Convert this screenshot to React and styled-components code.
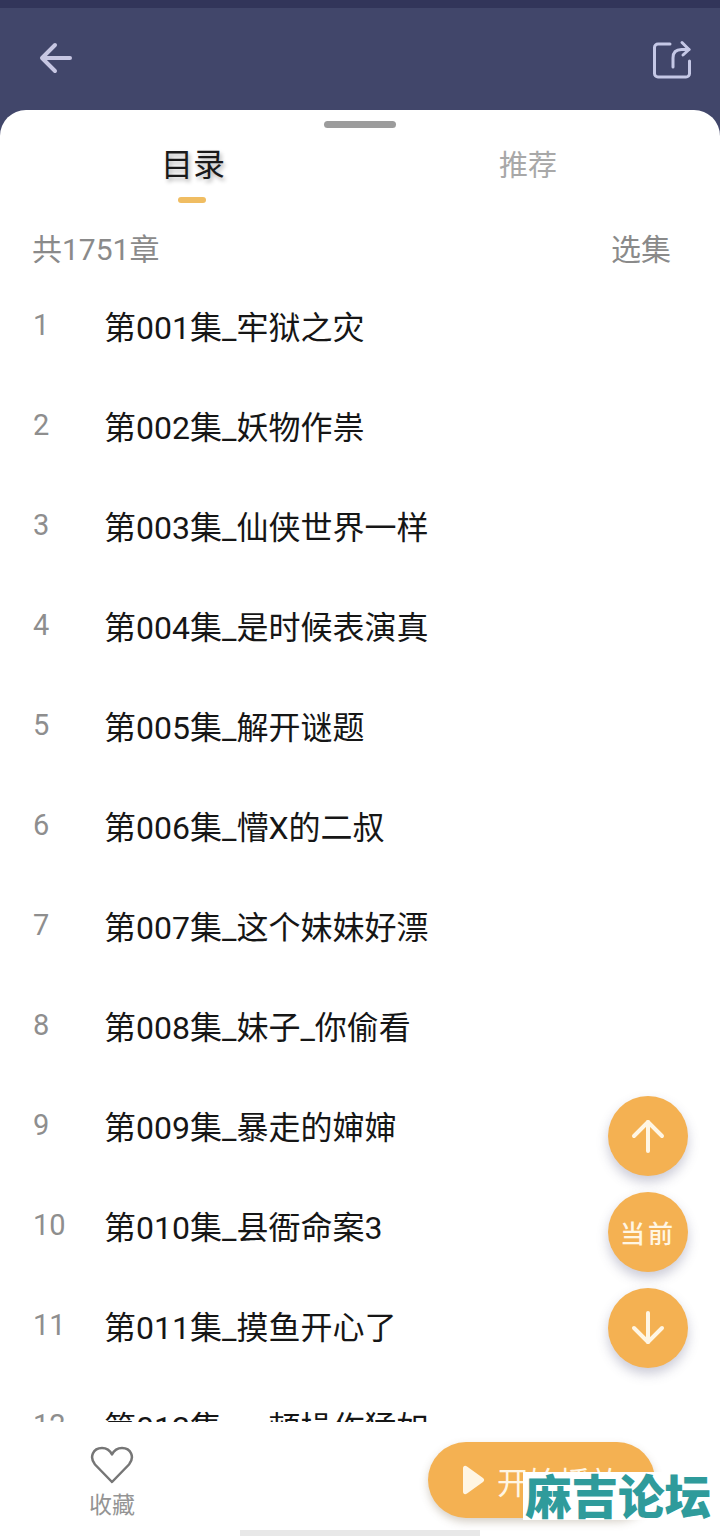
import React from 'react';
import styled, { createGlobalStyle } from 'styled-components';

const chapters = [
  '第001集_牢狱之灾',
  '第002集_妖物作祟',
  '第003集_仙侠世界一样',
  '第004集_是时候表演真',
  '第005集_解开谜题',
  '第006集_懵X的二叔',
  '第007集_这个妹妹好漂',
  '第008集_妹子_你偷看',
  '第009集_暴走的婶婶',
  '第010集_县衙命案3',
  '第011集_摸鱼开心了',
  '第012集_一顿操作猛如',
];

const GlobalStyle = createGlobalStyle`
  html, body {
    margin: 0;
    padding: 0;
    background: #41466a;
  }
  * {
    box-sizing: border-box;
  }
`;

const Page = styled.div`
  width: 720px;
  height: 1536px;
  overflow: hidden;
  display: flex;
  flex-direction: column;
  background: #41466a;
  font-family: Roboto, "Noto Sans CJK SC", sans-serif;
`;

const StatusStrip = styled.div`
  height: 8px;
  background: #32355a;
`;

const Header = styled.header`
  height: 102px;
  padding: 32px 28px 0 38px;
  display: flex;
  justify-content: space-between;
  align-items: flex-start;
`;

const Sheet = styled.main`
  position: relative;
  flex: 1;
  min-height: 0;
  display: flex;
  flex-direction: column;
  background: #fff;
  border-radius: 26px 26px 0 0;
`;

const Handle = styled.div`
  width: 72px;
  height: 7px;
  margin: 11px auto 0;
  border-radius: 4px;
  background: #9c9c9c;
`;

const Tabs = styled.div`
  height: 82px;
  display: flex;
`;

const Tab = styled.div`
  width: 50%;
  position: relative;
  display: flex;
  justify-content: center;
  padding-top: ${(p) => (p.$active ? '14px' : '15px')};
  padding-left: ${(p) => (p.$active ? '26px' : '0')};
  padding-right: ${(p) => (p.$active ? '0' : '24px')};
  font-size: ${(p) => (p.$active ? '32px' : '29px')};
  line-height: 46px;
  color: ${(p) => (p.$active ? '#1a1a1a' : '#a8a8a8')};
  text-shadow: ${(p) => (p.$active ? '2px 3px 4px rgba(0, 0, 0, 0.3)' : 'none')};
`;

const TabLabel = styled.span`
  display: block;
`;

const Indicator = styled.span`
  position: absolute;
  left: 178px;
  top: 69px;
  width: 28px;
  height: 6px;
  border-radius: 3px;
  background: #f0bd62;
`;

const Summary = styled.div`
  height: 67px;
  padding: 6px 49px 0 32px;
  display: flex;
  justify-content: space-between;
  align-items: center;
  font-size: 30px;
  color: #8a8a8a;
`;

const List = styled.ol`
  flex: 1;
  min-height: 0;
  overflow: hidden;
  margin: 0;
  padding: 0;
  list-style: none;
`;

const Row = styled.li`
  height: 100px;
  display: flex;
  align-items: center;
`;

const RowIndex = styled.span`
  width: 105px;
  padding-left: 33px;
  font-size: 29px;
  color: #8e8e8e;
  line-height: 40px;
  margin-bottom: 4px;
`;

const RowTitle = styled.span`
  font-size: 32px;
  line-height: 46px;
  color: #161616;
  white-space: nowrap;
  margin-left: -1px;
  margin-top: 2px;
`;

const FabStack = styled.div`
  position: absolute;
  right: 32px;
  top: 986px;
  display: flex;
  flex-direction: column;
  gap: 16px;
`;

const Fab = styled.button`
  width: 80px;
  height: 80px;
  padding: 0;
  border: 0;
  border-radius: 50%;
  display: flex;
  align-items: center;
  justify-content: center;
  background: #f4b152;
  color: #fff6e4;
  font-family: inherit;
  font-size: 25px;
  font-weight: 500;
  letter-spacing: 3px;
  box-shadow: 0 6px 12px rgba(70, 70, 110, 0.28);
`;

const Footer = styled.footer`
  height: 114px;
  flex-shrink: 0;
  display: flex;
  flex-direction: column;
  background: #fff;
`;

const FooterRow = styled.div`
  flex: 1;
  display: flex;
  justify-content: space-between;
  padding: 20px 65px 0 88px;
`;

const Favorite = styled.div`
  width: 48px;
  padding-top: 4px;
  display: flex;
  flex-direction: column;
  align-items: center;
  gap: 5px;
  font-size: 23px;
  line-height: 34px;
  color: #949494;
`;

const PlayButton = styled.button`
  width: 227px;
  height: 76px;
  padding: 0 0 0 33px;
  border: 0;
  border-radius: 38px;
  display: flex;
  align-items: center;
  gap: 12px;
  background: #f4b152;
  color: #fff6e4;
  font-family: inherit;
  font-size: 31px;
  box-shadow: 0 4px 8px rgba(120, 100, 70, 0.3);
`;

const HomeBar = styled.div`
  width: 240px;
  height: 6px;
  margin: 0 auto;
  background: #e8e8e8;
`;

const Watermark = styled.div`
  position: absolute;
  right: 0;
  bottom: 16px;
  width: 197px;
  height: 48px;
  padding-left: 2px;
  background: #fff;
  color: #2f9b9b;
  font-size: 46.500px;
  font-weight: 900;
  line-height: 52px;
  white-space: nowrap;
  overflow: hidden;
`;

const BackIcon = () => (
  <svg width="36" height="36" viewBox="0 0 36 36" fill="none" stroke="#c7c7e3" strokeWidth="4" strokeLinecap="round" strokeLinejoin="round">
    <path d="M32 18H5" />
    <path d="M17 5 4 18l13 13" />
  </svg>
);

const ShareIcon = () => (
  <svg width="40" height="40" viewBox="0 0 40 40" fill="none" stroke="#c5c8e6" strokeWidth="3" strokeLinecap="round" strokeLinejoin="round">
    <path d="M18 4H6a3.500 3.500 0 0 0-3.500 3.500v26A3.500 3.500 0 0 0 6 37h28a3.500 3.500 0 0 0 3.500-3.500V21" />
    <path d="M21 27V18q0-8.500 8.500-8.500H37" />
    <path d="M30 2.500 37 9.500 31 15" />
  </svg>
);

const ArrowIcon = ({ down }) => (
  <svg width="36" height="36" viewBox="0 0 36 36" fill="none" stroke="#fff6e4" strokeWidth="4" strokeLinecap="round" strokeLinejoin="round">
    {down ? (
      <>
        <path d="M18 3v29" />
        <path d="M4 18l14 14 14-14" />
      </>
    ) : (
      <>
        <path d="M18 33V4" />
        <path d="M4 18 18 4l14 14" />
      </>
    )}
  </svg>
);

const HeartIcon = () => (
  <svg width="44" height="38" viewBox="0 0 44 38" fill="none" stroke="#767676" strokeWidth="2.500" strokeLinejoin="round">
    <path d="M22 36 5 18.500C-1 11 3 2 12 2c4.500 0 8 2.500 10 6.500C24 4.500 27.500 2 32 2c9 0 13 9 7 16.500Z" />
  </svg>
);

const PlayIcon = () => (
  <svg width="24" height="30" viewBox="0 0 24 30" fill="#fff6e4">
    <path d="M2 3.500C2 1 4 0 6 1.500l16 11.500c1.500 1 1.500 3 0 4L6 28.500C4 30 2 29 2 26.500Z" />
  </svg>
);

export default function App() {
  return (
    <Page>
      <GlobalStyle />
      <StatusStrip />
      <Header>
        <BackIcon />
        <ShareIcon />
      </Header>
      <Sheet>
        <Handle />
        <Tabs>
          <Tab $active>
            <TabLabel>目录</TabLabel>
            <Indicator />
          </Tab>
          <Tab>
            <TabLabel>推荐</TabLabel>
          </Tab>
        </Tabs>
        <Summary>
          <span>共1751章</span>
          <span>选集</span>
        </Summary>
        <List>
          {chapters.map((title, i) => (
            <Row key={title}>
              <RowIndex>{i + 1}</RowIndex>
              <RowTitle>{title}</RowTitle>
            </Row>
          ))}
        </List>
        <Footer>
          <FooterRow>
            <Favorite>
              <HeartIcon />
              <span>收藏</span>
            </Favorite>
            <PlayButton>
              <PlayIcon />
              开始播放
            </PlayButton>
          </FooterRow>
          <HomeBar />
        </Footer>
        <FabStack>
          <Fab>
            <ArrowIcon />
          </Fab>
          <Fab>当前</Fab>
          <Fab>
            <ArrowIcon down />
          </Fab>
        </FabStack>
        <Watermark>麻吉论坛</Watermark>
      </Sheet>
    </Page>
  );
}
